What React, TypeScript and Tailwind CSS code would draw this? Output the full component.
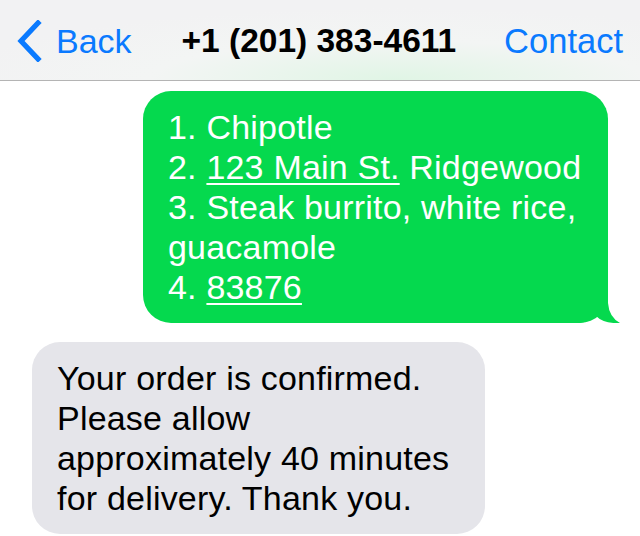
import React from "react";

const font = { fontFamily: '"Liberation Sans", Arial, Helvetica, sans-serif' };

export default function App() {
  return (
    <div className="w-[640px] h-[536px] bg-white overflow-hidden flex flex-col" style={font}>
      <div className="h-[81px] shrink-0 border-b border-[#b4b4b4] bg-[radial-gradient(ellipse_70%_90%_at_62%_100%,#e0f5e5_0%,#f3f5f4_55%,#f2f2f3_100%)] flex items-center justify-between pl-[16px] pr-[17px]">
        <div className="flex items-center gap-[14px] text-[#0a7aff] text-[34px] leading-none">
          <svg width="26" height="42" viewBox="0 0 26 42" className="mt-[1px]">
            <path d="M22 3 L5 21 L22 39" fill="none" stroke="#0a7aff" strokeWidth="5.2" strokeLinecap="square" strokeLinejoin="miter" />
          </svg>
          <span className="mt-[1px]">Back</span>
        </div>
        <div className="text-black text-[33.5px] font-bold leading-none mt-[2px] ml-[2px]">+1 (201) 383-4611</div>
        <div className="text-[#0a7aff] text-[34.5px] leading-none mt-[2px]">Contact</div>
      </div>

      <div className="flex flex-col pt-[10px]">
        <div className="flex justify-end pr-[32px]">
          <div className="relative w-[465px]">
            <div className="bg-[#05d94e] rounded-[28px] pl-[25px] pr-[10px] py-[16px] text-white text-[34px] leading-[40px] tracking-[0.2px]">
              <div>1. Chipotle</div>
              <div>
                2. <span className="underline decoration-[2px] underline-offset-[4px]">123 Main St.</span> Ridgewood
              </div>
              <div>3. Steak burrito, white rice,</div>
              <div>guacamole</div>
              <div>
                4. <span className="underline decoration-[2px] underline-offset-[4px]">83876</span>
              </div>
            </div>
            <svg className="absolute right-[-12px] bottom-0" width="44" height="34" viewBox="0 0 44 34">
              <path d="M4 0 L32 0 L32 14 Q33 28 44 34 Q28 35 20 27 Q14 33 2 34 L4 34 Z" fill="#05d94e" />
            </svg>
          </div>
        </div>

        <div className="flex justify-start pl-[32px] mt-[19px]">
          <div className="w-[453px] bg-[#e5e5ea] rounded-[28px] pl-[25px] pr-[10px] py-[16px] text-black text-[34px] leading-[40px] tracking-[0.2px]">
            <div>Your order is confirmed.</div>
            <div>Please allow</div>
            <div>approximately 40 minutes</div>
            <div>for delivery. Thank you.</div>
          </div>
        </div>
      </div>
    </div>
  );
}
